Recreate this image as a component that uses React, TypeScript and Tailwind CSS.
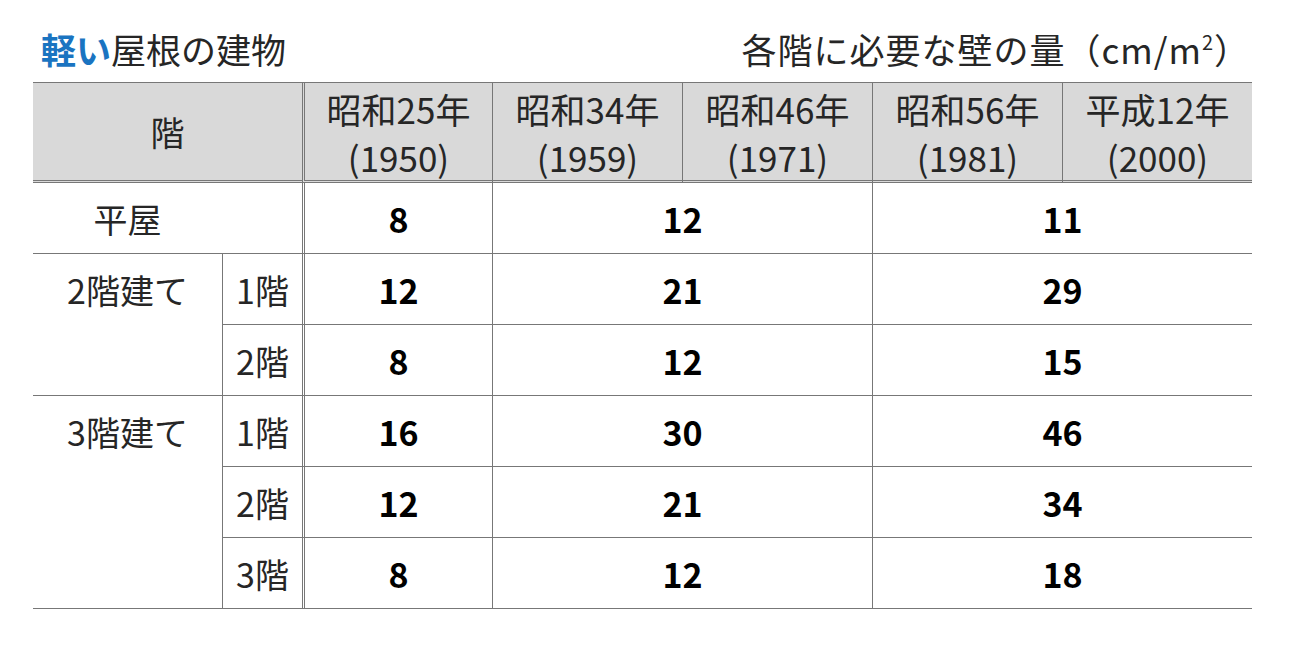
const years = [
  ["昭和25年", "(1950)"],
  ["昭和34年", "(1959)"],
  ["昭和46年", "(1971)"],
  ["昭和56年", "(1981)"],
  ["平成12年", "(2000)"],
];

type Row = { floor: string; values: [string, string, string] };

const groups: { label: string; rows: Row[] }[] = [
  {
    label: "2階建て",
    rows: [
      { floor: "1階", values: ["12", "21", "29"] },
      { floor: "2階", values: ["8", "12", "15"] },
    ],
  },
  {
    label: "3階建て",
    rows: [
      { floor: "1階", values: ["16", "30", "46"] },
      { floor: "2階", values: ["12", "21", "34"] },
      { floor: "3階", values: ["8", "12", "18"] },
    ],
  },
];

const ValueCells = ({ values }: { values: [string, string, string] }) => (
  <>
    <div className="flex items-center justify-center border-b border-l-[3px] border-b-[#777] border-l-[#777] border-double font-bold text-black">
      {values[0]}
    </div>
    <div className="col-span-2 flex items-center justify-center border-b border-l border-[#777] font-bold text-black">
      {values[1]}
    </div>
    <div className="col-span-2 flex items-center justify-center border-b border-l border-[#777] font-bold text-black">
      {values[2]}
    </div>
  </>
);

export default function App() {
  return (
    <div className="w-[1300px] h-[660px] bg-white pl-[33px] font-['Noto_Sans_CJK_JP','Noto_Sans',sans-serif] text-[34px] text-[#262626]">
      <div className="w-[1219px] h-[82px] pt-[16px] flex items-center justify-between text-[35px]">
        <h1 className="pl-[8px] leading-[48px]">
          <span className="font-bold text-[#1a74c1]">軽い</span>屋根の建物
        </h1>
        <p className="leading-[48px] pr-[2px] tracking-[1px]">
          各階に必要な壁の量（cm/m<sup className="text-[20px] -top-[14px]">2</sup>）
        </p>
      </div>

      <div className="w-[1219px] grid grid-cols-[189px_80px_190px_190px_190px_190px_190px] grid-rows-[100px_repeat(6,71px)] border-t border-[#777]">
        {/* header */}
        <div className="col-span-2 flex items-center justify-center bg-[#d9d9d9] border-b-[3px] border-double border-[#777]">
          階
        </div>
        {years.map(([era, year], i) => (
          <div
            key={era}
            className={`flex flex-col items-center justify-center pt-[2px] bg-[#d9d9d9] border-b-[3px] border-b-[#777] border-double leading-[48px] text-[35px] ${
              i === 0 ? "border-l-[3px] border-l-[#777]" : "border-l border-l-[#777]"
            }`}
          >
            <span>{era}</span>
            <span>{year}</span>
          </div>
        ))}

        {/* 平屋 */}
        <div className="col-span-2 flex items-center justify-center pr-[80px] border-b border-[#777]">平屋</div>
        <ValueCells values={["8", "12", "11"]} />

        {groups.map((g) => (
          <div key={g.label} className="contents">
            <div className={`${g.rows.length === 2 ? "row-span-2" : "row-span-3"} border-b border-[#777]`}>
              <div className="h-[71px] flex items-center justify-center">{g.label}</div>
            </div>
            {g.rows.map((r) => (
              <div key={r.floor} className="contents">
                <div className="flex items-center justify-center border-b border-l border-[#777]">{r.floor}</div>
                <ValueCells values={r.values} />
              </div>
            ))}
          </div>
        ))}
      </div>
    </div>
  );
}
